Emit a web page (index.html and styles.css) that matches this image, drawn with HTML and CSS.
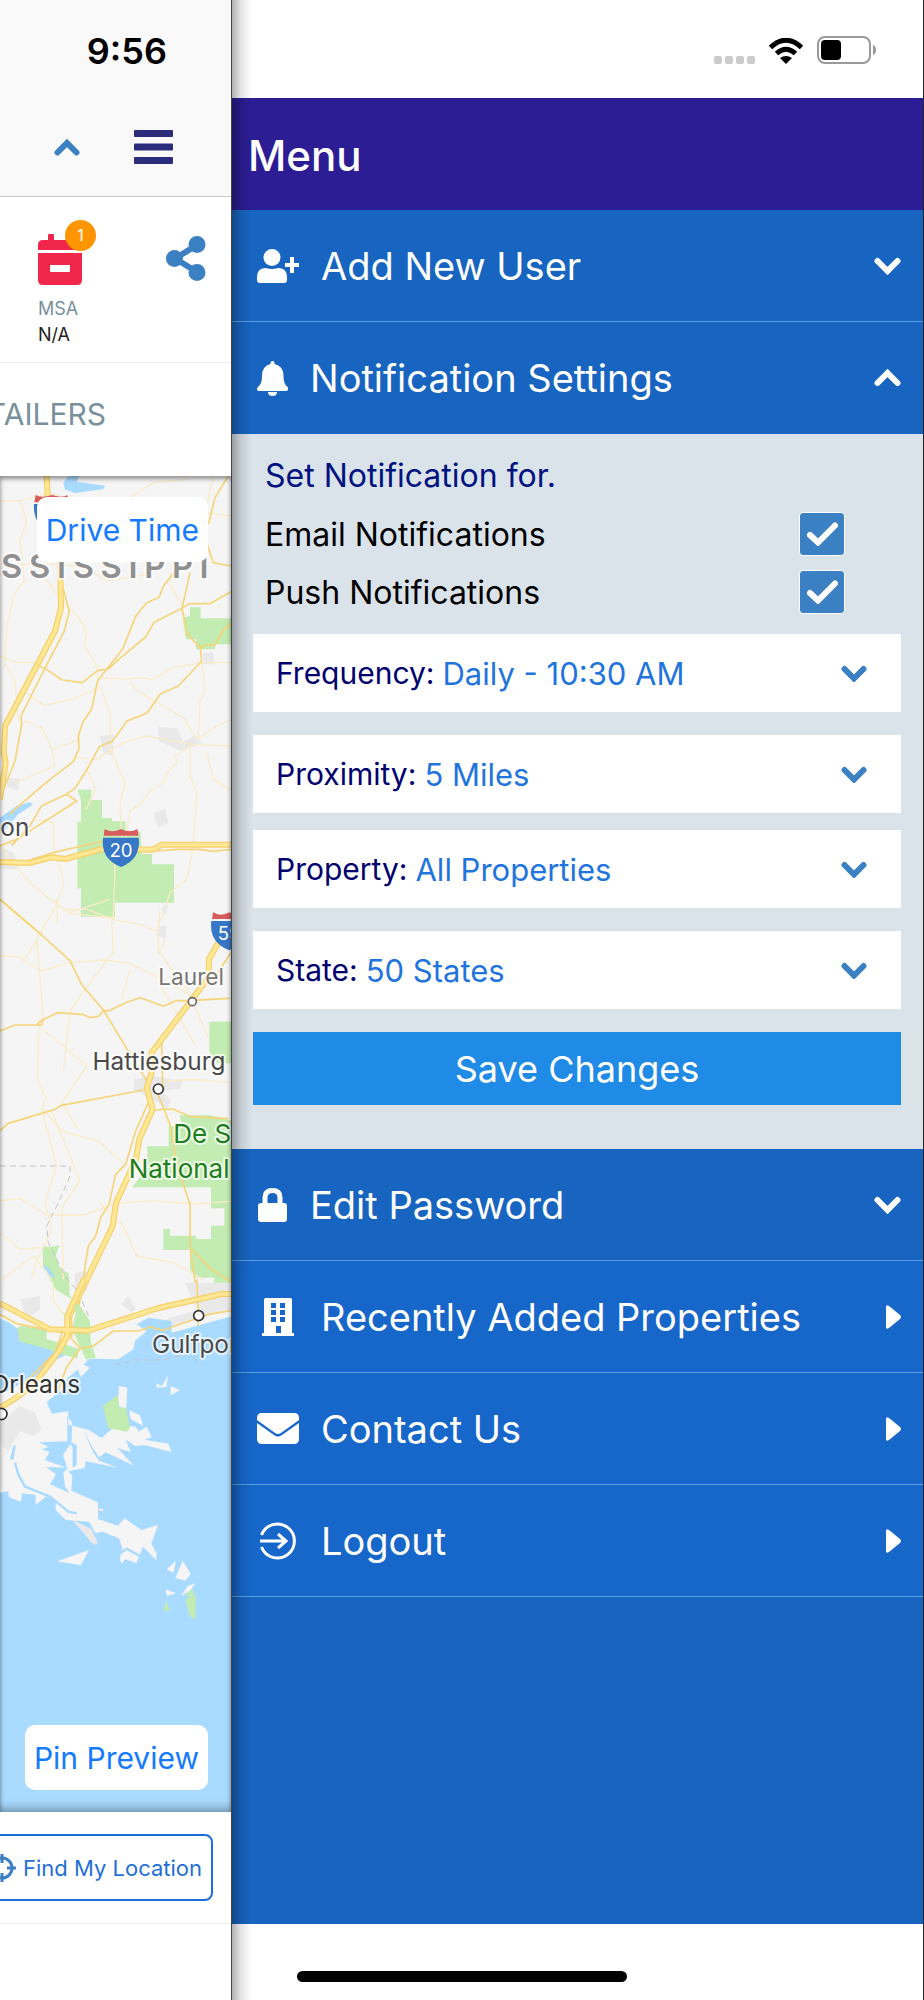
FILE: index.html
```html
<!DOCTYPE html>
<html lang="en">
<head>
    <meta charset="UTF-8">
    <meta name="viewport" content="width=device-width, initial-scale=1.0">
    <title>Menu</title>
    <link rel="stylesheet" href="styles.css">
</head>
<body>
    <div class="app">
        <main class="page">
            <header class="page-header">
                <div class="clock">9:56</div>
                <div class="page-actions">
                    <button class="icon-btn" aria-label="Collapse">
                        <svg width="26" height="17" viewBox="0 0 26 17"><path d="M3.500 13.500 13 4l9.500 9.500" fill="none" stroke="#3b80c3" stroke-width="6" stroke-linecap="round"/></svg>
                    </button>
                    <button class="icon-btn" aria-label="Open menu">
                        <svg width="39" height="34" viewBox="0 0 39 34" fill="#2c2c7c"><rect width="39" height="7" rx="1"/><rect y="13.500" width="39" height="7" rx="1"/><rect y="27" width="39" height="7" rx="1"/></svg>
                    </button>
                </div>
            </header>

            <section class="stats">
                <div class="stat">
                    <div class="stat-icon">
                        <svg width="44" height="51" viewBox="0 0 44 51"><path d="M5 6h5V1q0-1 1-1h4q1 0 1 1v5h12V1q0-1 1-1h4q1 0 1 1v5h5q5 0 5 5v5H0v-5q0-5 5-5zM0 19h44v27q0 5-5 5H5q-5 0-5-5zm13 12q-1 0-1 1v5q0 1 1 1h18q1 0 1-1v-5q0-1-1-1z" fill="#f0264b" fill-rule="evenodd"/></svg>
                        <span class="badge">1</span>
                    </div>
                    <div class="stat-label">MSA</div>
                    <div class="stat-value">N/A</div>
                </div>
                <button class="icon-btn share" aria-label="Share">
                    <svg width="40" height="45" viewBox="0 0 40 45"><path d="M31 9 9 22.500 31 36" fill="none" stroke="#3b80c3" stroke-width="6"/><g fill="#3b80c3"><circle cx="31" cy="8.500" r="8.500"/><circle cx="8.500" cy="22.500" r="8.500"/><circle cx="31" cy="36.500" r="8.500"/></g></svg>
                </button>
            </section>

            <nav class="tabs"><a class="tab" href="#">RETAILERS</a></nav>

            <section class="map">
                <svg class="map-canvas" viewBox="0 20 693 4008" preserveAspectRatio="xMaxYMin slice">
                    <rect y="0" width="693" height="4028" fill="#f5f5f5"/>

                    <!-- north -->
                    <g>
                        <path class="town" d="M475 773l55 4 20 40 35-20 22 25-70 22-60-30zM300 800l40-5v65l-30-10zM460 1030l35-10 10 40-30 15zM15 925l45 3-8 35-30-10zM610 550h32v35h-32zM0 1130l40 20 20 50H0z"/>
                        <path class="water" d="M190 40l20-25h30l-10 22 85 12-5 10-85 12-30-10zM0 1045l50-35 40-12 8 8-45 30-40 50H0z"/>
                        <path class="park" d="M570 414h32v33h91v78h-48v15h-57v-30h-30l-10-63 22-8zM232 961h42v31h32v54h30v10h40v30h45l5 68h30v31h66v115H345v42H243v-85h-11v-200h11v-65z"/>
                        <path class="lane" d="M0 95l60 0 20 60-20 60 12 120-30 40-20 90-7 120 30 50 10 120M60 95l90-25 80 30 150-10 80-50 100-10M0 285h180l80 10 60 40 120-20M640 20l-20 90-5 20 78 10M510 310v35l35 60M0 560l50 20h80M130 320l60 80 50 50 20 40-7 35 40 70 0 30 90 5 30-5 45 5 60-35 90-15 100 0 40 10M605 575l10 90-15 30-5 110M300 650l30 80v110l45 100-15 60 5 110M80 670l50 38 85-18 80-35M60 770l20-15 45 20 30 60 10 55-120 50M160 840l80-30M220 865l70 5 80-50 70-20 80 15 60 10 113 5M390 640l30 30 130 75 40 65 60-40 43-20M570 825v95l20 50-10 160-20 100-50 40-35 100 20 50-20 30M570 830l-45 30 5 20-30 30-10 30-40 25-30 40-30 20-20 120M260 900l28 60-30 60M100 1050l60 10 2 80 30 100-20 60v60M620 850l20 80 50 30M0 1130l30 40 60 70 60 50 60 42 130 15 5-160-5-70M210 1330l120-40"/>
                        <path class="road" d="M685 20l-40 65-20 80M620 220l20 60 53 10M693 367l-63 36h-62l-22 14-84 42-25 44-82 68-30 28-33 5-45 36-60-8-53-35-30-12M570 310l-24 107 17 78 38 40 4 40-70 75-54 24-40 57-60 24-43 60-40 17-38 70-35 55-30 20-70 32-35 60-55 60M530 300l-40 50-12 33-38 18-32 38-40 100-75 95-18 85-26 38-14 42 2 38-17 40-70 53-100 85-20 20M190 360l18 65-15 60-60 115-70 140 2 25-20 110-45 110M601 537l12-10h32l25-45 23-18M0 1130l50-20 180-115-30-20M80 1175l80-25 150-35M470 1145l60-5h70l40 6 53-6M0 1290l105 90"/>
                        <path class="highway-edge" d="M140 20l3 60 37 180 3 155-18 70-150 285-4 80 6 30-17 110M0 1178l85 3 70-17 40 5 110-30 155 2 25-15h208"/>
                        <path class="highway" d="M140 20l3 60 37 180 3 155-18 70-150 285-4 80 6 30-17 110M0 1178l85 3 70-17 40 5 110-30 155 2 25-15h208"/>
                        <g transform="translate(102 77)">
                            <path d="M5 0q15 10 50 0 30 10 45 0l5 22H1z" fill="#d95c5c"/><path d="M0 27h107q5 65-53 88Q-4 92 0 27z" fill="#3777c8"/>
                        </g>
                        <text class="state-name" x="646" y="326" text-anchor="end">MISSISSIPPI</text>
                        <text class="city" x="88" y="1101" text-anchor="end">Jackson</text>
                        <g transform="translate(309 1078)">
                            <path d="M5 1q22 14 49 0 27 14 49 0l4 20H2z" fill="#d95c5c"/><path d="M0 27h107q8 63-53 88Q-8 90 0 27z" fill="#3777c8"/>
                            <text class="shield" x="54" y="84" text-anchor="middle">20</text>
                        </g>
                    </g>

                    <!-- central -->
                    <g transform="translate(0 1290)">
                        <path class="town" d="M402 540l60-10 85 15-5 22-60 8 30 25-10 30-45-30-55-28zM470 82l30-3-3 40-27-12zM485 25l20-10-10 35zM225 1120l35-5v60h-35zM365 1215l20-25 22 40-12 8z"/>
                        <path class="park" d="M628 367h65v125h-43l-22-35zM538 648h90l65 15v560h-50v-88h-53l-20-25v-58H490v-63h20v20h78v10h45v-40h40v-52h-40v-63H397l45-60v-63h64v-60h42zM128 1040l20 3 30-5-10 30 10 35 28 20 3 60-40-10-40-70zM60 1280l80 10v30l-85 0z"/>
                        <path class="water" d="M130 1095l20 15 15 25-20-5zM655 1205h38v12l-30-2z"/>
                        <path class="lane" d="M0 170l60 2 15 15 50 28 80-25 110-8 75 10 100 50 80 45M110 120l20 240-15 30-2 155 25 50M170 0v15l-60 105-35 60M130 390l130 110-75 110 50 80M200 30l60 0 80 30 80 15 50 20M335 60l5 100-25 30-60 80-45 65-20 180M390 210l-25 90M475 95v60l90 120 60 140M485 265l70 120 30 50M140 590l-15 40 45 170-35 110 20 80-50 110-10 40M125 625l60 70 110 30 85 75M0 905l60-8 80 50h110l100-35 100-8 140 10 100-8M155 635l85 210-55 80 5 220M300 910l70 70 40 90 110 20 90 50M0 1000l60 50 60-5M0 1145l100-75 60 75v60l50 60M500 545l80-5 110 10M480 30l-5 65"/>
                        <path class="road" d="M0 0l125 107 85 77 35 72 65 76 70 115 65 105M0 395l45-18h80l5-18M108 378l12-12 52-26 75 5 25 10 25-5 13-17 15 2 55-26 42-14 68 26 38-17 35 0 127-7M485 430l3 130-18 15 40 100 20 120 40 120v130l22 150 3 100M430 572L185 618l-20 12L25 672 0 694M458 632l60-3 50 22 115 7M575 1050l60 60 58 37M445 610l-38 85-30 100-30 30-20 90-25 40-15 55-22 30-30 190M693 160l-60 90"/>
                        <path class="boundary" d="M0 800h210v30l-30 70-40 80 5 50 50 100 40 50 35 80"/>
                        <path class="highway-edge" d="M655 130l-28 50-2 55-60 80-110 145v60l-15 45 18 65-40 90-10 60-60 130-10 70-130 270v50l-50 75"/>
                        <path class="highway" d="M655 130l-28 50-2 55-60 80-110 145v60l-15 45 18 65-40 90-10 60-60 130-10 70-130 270v50l-50 75"/>
                        <g transform="translate(634 38)">
                            <path d="M5 1q22 14 49 0 27 14 49 0l4 20H2z" fill="#d95c5c"/><path d="M0 27h107q8 63-53 88Q-8 90 0 27z" fill="#3777c8"/>
                            <text class="shield" x="54" y="84" text-anchor="middle">59</text>
                        </g>
                        <circle class="dot small" cx="577" cy="307" r="12"/>
                        <circle class="dot" cx="475" cy="569" r="15"/>
                        <text class="city minor" x="672" y="256" text-anchor="end">Laurel</text>
                        <text class="city" x="676" y="511" text-anchor="end">Hattiesburg</text>
                        <text class="forest" x="520" y="732">De Soto</text>
                        <text class="forest" x="386" y="836">National Forest</text>
                    </g>

                    <!-- gulf coast -->
                    <g transform="translate(0 2430)">
                        <path class="town" d="M555 10h138v80l-130 40-110 28 50-40 90-25zM60 60l60-10v40l-40 30zM365 75l20-25 22 40-12 8z"/>
                        <path class="water" d="M0 118l25 10 30 22 15 35 60 8 110 50 45-5 70 2 45-30 5-25 35-30-30-20 35-20 70 10v35l203-55v1505H0z"/>
                        <path class="land" d="M0 345l100-50 60-50 80-40 20 8 0 35-60 50-10 30-50 40 15 35 50-7v40l60 15 40 25 40-35h60l30 40 70 12 10 25-80-20-30 2-28-20 15 38-40-12 50 53-85-40-20 15-20-30-25-50 25 60 20 30 60 22-100-20-3 20-50 10-15-50 25-35 3-60-15-20v75l-85 3 38 18-20 35 60 22 22 25-3 45 80 35v50l60 20 20-22 50 35 50-15-20 55 15 30 0 20-40-40-20 50-15 45-35-55 8-35-10-30-50-20-20 5-20-35-70-5-30-30v-30l-30-10-30 25v-30l-40-5-5 25-50-20-40-25zM225 245l45 20-28 28zM357 320l25 5-3 65-25-10zM352 388h26l-10 28zM388 393l32 15 10 32-38-20zM410 460l30-18 15 32-50 16zM172 846l95-34-25 46zM292 687l20 2-8 8zM468 312l18 8 18-32-5 35-28 2zM512 320l28 12-28 16zM500 870l28-25-8 35zM548 844l24 40-16 20-30-8zM585 912l-12 20-30 18 20-30zM498 930l30 12-28 8z"/>
                        <path class="town" d="M0 430l60-50 45 20 20 50-25 20-40-15-35 60-25-20zM215 720l60 30 25 55-25-15z"/>
                        <path class="water" d="M125 510l35-12v22zM150 615l18-30-30-22 65 2-13 15 5 42 15 20zM205 485l25 12v60l-12 8v-60zM0 640l25-5 3 35-20 2zM375 840l45 15 25 35-25-5-22 20-25-25-8-25zM30 540l10-40 8-3-8 45z"/>
                        <path class="channel" d="M45 550l10 35 20 37 75 30 55 45 25 5M290 795l70 28 20-15 45 25"/>
                        <path class="park" d="M308 380l45-33 5 38h20l12 60-10 12-55-10zM52 145l22-5 8 28 55 10 100 30-5 30-40-12-60-20-75-20zM155 0h45l10 50 30 30 30 45 2 60 15 50-30 5-40-90 10-50-12-40-40-25zM555 960l33-15-2 75-16-8zM490 993l10-30 9 33zM555 948l22-20 5 14-8 10z"/>
                        <path class="boundary" d="M345 257l60-15h80l80-18 45 35"/>
                        <path class="road" d="M0 105l50 28 100 20 55 8M340 155h75l35-12 40 10 130-47 73-12M340 155l-60 45-38 8-28-30 5-40M190 150l-25 70-110 110M240 208l-40 55-30 80M590 0l5 95"/>
                        <path class="highway-edge" d="M0 72l150 78 115 4 210-68 190-42h28M252 0l-50 110v60l-25 45-75 100-60 45-42 25"/>
                        <path class="highway" d="M0 72l150 78 115 4 210-68 190-42h28M252 0l-50 110v60l-25 45-75 100-60 45-42 25"/>
                        <circle class="dot" cx="596" cy="109" r="15"/>
                        <circle class="dot" cx="4" cy="404" r="17"/>
                        <text class="city" x="456" y="222">Gulfport</text>
                        <text class="city dark" x="240" y="342" text-anchor="end">New Orleans</text>
                    </g>
                </svg>
                <button class="map-btn drive-time">Drive Time</button>
                <button class="map-btn pin-preview">Pin Preview</button>
            </section>

            <footer class="page-footer">
                <button class="locate-btn">
                    <svg width="28" height="28" viewBox="0 0 28 28" fill="none" stroke="#3b80c3" stroke-width="3"><circle cx="14" cy="14" r="10"/><path d="M14 0v9M14 19v9M0 14h9M19 14h9"/></svg>
                    Find My Location
                </button>
            </footer>
            <div class="safe-area"></div>
        </main>

        <aside class="drawer">
            <div class="status-bar">
                <svg width="41" height="8" viewBox="0 0 41 8" fill="#ccc"><rect width="8" height="8" rx="2"/><rect x="11" width="8" height="8" rx="2"/><rect x="22" width="8" height="8" rx="2"/><rect x="33" width="8" height="8" rx="2"/></svg>
                <svg width="36" height="26" viewBox="0 0 36 26"><path d="M2.500 9.500Q18-5 33.500 9.500M8.500 15.500Q18 7 27.500 15.500" fill="none" stroke="#000" stroke-width="5"/><path d="M12 20q6-4 12 0l-6 6z"/></svg>
                <svg width="59" height="28" viewBox="0 0 59 28"><rect x="1" y="1" width="52" height="26" rx="7" fill="none" stroke="#999" stroke-width="2"/><rect x="4" y="4" width="20" height="20" rx="4"/><path d="M56 9q3 1 3 5t-3 5z" fill="#999"/></svg>
            </div>

            <h1 class="drawer-title">Menu</h1>

            <nav class="menu">
                <button class="menu-item">
                    <svg width="42" height="34" viewBox="0 0 42 34" fill="#fff"><ellipse cx="15" cy="8.500" rx="8.500" ry="8.500"/><path d="M0 28q0-9 9-9 6 2 12 0 9 0 9 9v3q0 3-3 3H3q-3 0-3-3zM33 8h4v6h5v4h-5v6h-4v-6h-5v-4h5z"/></svg>
                    <span>Add New User</span>
                    <svg class="arrow" width="27" height="18" viewBox="0 0 27 18"><path d="M3.500 4 13.500 14l10-10" fill="none" stroke="#fff" stroke-width="6" stroke-linecap="round"/></svg>
                </button>
                <button class="menu-item" aria-expanded="true">
                    <svg width="31" height="35" viewBox="0 0 31 35" fill="#fff"><path d="M13.500 2q0-2 2-2t2 2v1q9 2 9 12 0 8 4 11 1 1 .5 2.500-.5 1.500-2 1.500H2Q.500 30 0 28.500-.200 27 1 26q4-3 4-11 0-10 8.500-12zM11 31h9q0 4-4.500 4T11 31z"/></svg>
                    <span>Notification Settings</span>
                    <svg class="arrow" width="27" height="18" viewBox="0 0 27 18"><path d="M3.500 14 13.500 4l10 10" fill="none" stroke="#fff" stroke-width="6" stroke-linecap="round"/></svg>
                </button>

                <form class="settings">
                    <h2 class="settings-title">Set Notification for.</h2>
                    <label class="check-row">
                        Email Notifications
                        <span class="check">
                            <input type="checkbox" checked>
                            <svg width="31" height="24" viewBox="0 0 31 24"><path d="M3 13l8 7.500L28 3.500" fill="none" stroke="#fff" stroke-width="6" stroke-linecap="round"/></svg>
                        </span>
                    </label>
                    <label class="check-row">
                        Push Notifications
                        <span class="check">
                            <input type="checkbox" checked>
                            <svg width="31" height="24" viewBox="0 0 31 24"><path d="M3 13l8 7.500L28 3.500" fill="none" stroke="#fff" stroke-width="6" stroke-linecap="round"/></svg>
                        </span>
                    </label>

                    <div class="fields">
                        <div class="field">
                            <label for="frequency">Frequency:</label>
                            <select id="frequency"><option>Daily - 10:30 AM</option></select>
                            <svg width="26" height="17" viewBox="0 0 26 17"><path d="M3.500 4 13 13.500 22.500 4" fill="none" stroke="#3b80c3" stroke-width="6" stroke-linecap="round"/></svg>
                        </div>
                        <div class="field">
                            <label for="proximity">Proximity:</label>
                            <select id="proximity"><option>5 Miles</option></select>
                            <svg width="26" height="17" viewBox="0 0 26 17"><path d="M3.500 4 13 13.500 22.500 4" fill="none" stroke="#3b80c3" stroke-width="6" stroke-linecap="round"/></svg>
                        </div>
                    </div>
                    <div class="fields">
                        <div class="field">
                            <label for="property">Property:</label>
                            <select id="property"><option>All Properties</option></select>
                            <svg width="26" height="17" viewBox="0 0 26 17"><path d="M3.500 4 13 13.500 22.500 4" fill="none" stroke="#3b80c3" stroke-width="6" stroke-linecap="round"/></svg>
                        </div>
                        <div class="field">
                            <label for="state">State:</label>
                            <select id="state"><option>50 States</option></select>
                            <svg width="26" height="17" viewBox="0 0 26 17"><path d="M3.500 4 13 13.500 22.500 4" fill="none" stroke="#3b80c3" stroke-width="6" stroke-linecap="round"/></svg>
                        </div>
                        <button type="button" class="save-btn">Save Changes</button>
                    </div>
                </form>

                <button class="menu-item">
                    <svg width="31" height="34" viewBox="0 0 31 34"><path d="M8 16V9.500q0-7 7.500-7t7.500 7V16" fill="none" stroke="#fff" stroke-width="5"/><rect x="1" y="15" width="29" height="19" rx="3" fill="#fff"/></svg>
                    <span>Edit Password</span>
                    <svg class="arrow" width="27" height="18" viewBox="0 0 27 18"><path d="M3.500 4 13.500 14l10-10" fill="none" stroke="#fff" stroke-width="6" stroke-linecap="round"/></svg>
                </button>
                <a class="menu-item link" href="#">
                    <svg width="42" height="38" viewBox="0 0 42 38"><path d="M7 1.500Q7 0 8.500 0h25Q35 0 35 1.500V35h2v3H5v-3h2zM14 5v5h5V5zm9 0v5h5V5zm-9 7v5h5v-5zm9 0v5h5v-5zm-9 7v5h5v-5zm9 0v5h5v-5zm-4 9v7h5v-7z" fill="#fff" fill-rule="evenodd"/></svg>
                    <span>Recently Added Properties</span>
                    <svg class="arrow" width="15" height="24" viewBox="0 0 15 24"><path d="M0 2q0-3 3-1l11 9q2 2 0 4L3 23q-3 2-3-1z" fill="#fff"/></svg>
                </a>
                <a class="menu-item link" href="#">
                    <svg width="42" height="31" viewBox="0 0 42 31" fill="#fff"><path d="M0 5q0-5 5-5h32q5 0 5 5v2L24 20q-3 2-6 0L0 7z"/><path d="M0 10l17 12q4 3 8 0l17-12v16q0 5-5 5H5q-5 0-5-5z"/></svg>
                    <span>Contact Us</span>
                    <svg class="arrow" width="15" height="24" viewBox="0 0 15 24"><path d="M0 2q0-3 3-1l11 9q2 2 0 4L3 23q-3 2-3-1z" fill="#fff"/></svg>
                </a>
                <a class="menu-item link" href="#">
                    <svg width="42" height="38" viewBox="0 0 42 38" fill="none" stroke="#fff" stroke-width="3"><path d="M4.500 13a17 17 0 1 1 0 12M3 19h26M21 12l8 7-8 7"/></svg>
                    <span>Logout</span>
                    <svg class="arrow" width="15" height="24" viewBox="0 0 15 24"><path d="M0 2q0-3 3-1l11 9q2 2 0 4L3 23q-3 2-3-1z" fill="#fff"/></svg>
                </a>
            </nav>

            <div class="home-area"><span class="home-indicator"></span></div>
        </aside>
    </div>
</body>
</html>
```
FILE: styles.css
```css
* {
    margin: 0;
    padding: 0;
    box-sizing: border-box;
}

body {
    font-family: Inter, 'Liberation Sans', sans-serif;
    background: #fff;
}

button, select {
    font-family: inherit;
    border: none;
    background: none;
    cursor: pointer;
}

a {
    text-decoration: none;
}

svg {
    display: block;
    flex-shrink: 0;
}

.app {
    display: flex;
    min-height: 100vh;
    overflow: hidden;
}

/* Page behind the drawer */
.page {
    width: 25%;
    flex-shrink: 0;
    display: flex;
    flex-direction: column;
    overflow: hidden;
}

.page-header {
    height: 197px;
    background: #f9f9f9;
    border-bottom: 1px solid #c8c8c8;
    display: flex;
    flex-direction: column;
    align-items: flex-end;
}

.clock {
    padding: 28px 64px 0 0;
    font-size: 36px;
    line-height: 46px;
    font-weight: 600;
}

.page-actions {
    display: flex;
    align-items: center;
    gap: 54px;
    padding: 56px 58px 0 0;
}

.stats {
    height: 166px;
    border-bottom: 1px solid #eee;
    display: flex;
    justify-content: flex-end;
    gap: 85px;
    padding: 37px 25px 0 0;
}

.stat {
    width: 43px;
    font-size: 18px;
    line-height: 26px;
}

.stat-icon {
    position: relative;
    margin-bottom: 11px;
}

.badge {
    position: absolute;
    top: -14px;
    left: 27px;
    width: 31px;
    height: 31px;
    border-radius: 50%;
    background: #ff9500;
    color: #fff;
    font-size: 16px;
    line-height: 31px;
    text-align: center;
}

.stat-label {
    color: #78909c;
}

.stat-value {
    color: #222;
}

.share {
    align-self: flex-start;
    padding-top: 2px;
}

.tabs {
    height: 113px;
    display: flex;
    justify-content: flex-end;
    align-items: center;
    padding: 0 125px 12px 0;
}

.tab {
    color: #78909c;
    font-size: 30px;
    line-height: 40px;
}

.map {
    position: relative;
    flex: 1;
    overflow: hidden;
    background: #a9daff;
}

.map::after {
    content: '';
    position: absolute;
    inset: 0;
    box-shadow: inset 0 3px 4px rgba(0, 0, 0, 0.4), inset 0 -8px 10px -4px rgba(0, 0, 0, 0.3);
    pointer-events: none;
}

.map-canvas {
    width: 100%;
}

.map-btn {
    position: absolute;
    right: 23px;
    height: 65px;
    padding: 0 9px;
    border-radius: 10px;
    background: #fff;
    color: #147aff;
    font-size: 30px;
    white-space: nowrap;
}

.drive-time {
    top: 21px;
}

.pin-preview {
    bottom: 22px;
}

.page-footer {
    height: 112px;
    display: flex;
    justify-content: flex-end;
    align-items: center;
    padding-right: 18px;
    border-bottom: 1px solid #eee;
}

.locate-btn {
    display: flex;
    align-items: center;
    gap: 7px;
    flex-shrink: 0;
    height: 67px;
    padding: 0 9px;
    border: 2px solid #1a6fdc;
    border-radius: 8px;
    color: #1f6fd6;
    font-size: 22px;
    white-space: nowrap;
}

.safe-area {
    height: 76px;
}

/* Map drawing */
.water { fill: #a9daff; }
.land { fill: #f5f5f5; }
.park { fill: #c3ecb2; }
.town { fill: #e9e9e9; }

.lane, .road, .highway, .highway-edge, .boundary, .channel {
    fill: none;
    stroke-linejoin: round;
}

.lane {
    stroke: #faecc8;
    stroke-width: 4;
}

.road {
    stroke: #f6d479;
    stroke-width: 5;
}

.highway {
    stroke: #ffe794;
    stroke-width: 11;
}

.highway-edge {
    stroke: #f5cf68;
    stroke-width: 18;
}

.channel {
    stroke: #a9daff;
    stroke-width: 7;
}

.boundary {
    stroke: #c4c4c4;
    stroke-width: 3;
    stroke-dasharray: 18 12;
}

.dot {
    fill: #fff;
    stroke: #333;
    stroke-width: 5;
}

.dot.small {
    stroke: #666;
}

.city, .forest, .state-name {
    paint-order: stroke;
    stroke: #fff;
    stroke-width: 12;
    stroke-opacity: 0.7;
    stroke-linejoin: round;
    font-size: 73px;
    fill: #4a4a4a;
}

.city.minor {
    fill: #777;
    font-size: 68px;
}

.city.dark { fill: #333; }

.forest {
    fill: #1e7d1e;
    font-size: 78px;
}

.state-name {
    fill: #909090;
    font-size: 98px;
    font-weight: 600;
    letter-spacing: 20px;
}

.shield {
    fill: #fff;
    font-size: 56px;
}

/* Drawer */
.drawer {
    position: relative;
    flex: 1;
    display: flex;
    flex-direction: column;
    border-left: 1px solid #444;
    border-right: 1px solid #222;
}

.drawer::before {
    content: '';
    position: absolute;
    top: 0;
    bottom: 0;
    left: 0;
    width: 20px;
    background: linear-gradient(to right, rgba(0, 0, 0, 0.3), rgba(0, 0, 0, 0.1) 45%, transparent);
    pointer-events: none;
    z-index: 1;
}

.status-bar {
    height: 98px;
    display: flex;
    justify-content: flex-end;
    align-items: flex-end;
    gap: 13px;
    padding: 0 47px 34px 0;
}

.drawer-title {
    height: 112px;
    padding: 0 16px;
    background: #2c1d94;
    color: #fff;
    font-size: 42px;
    line-height: 115px;
    font-weight: 500;
}

.menu {
    flex: 1;
    background: #1765c0;
}

.menu-item {
    width: 100%;
    height: 112px;
    display: flex;
    align-items: center;
    gap: 22px;
    padding: 0 22px 0 25px;
    border-bottom: 1px solid #559fe3;
    color: #fff;
    font-size: 38px;
    line-height: 48px;
}

.menu-item.link {
    background: #1766c9;
}

.menu-item[aria-expanded="true"] {
    border-bottom: none;
}

.arrow {
    margin-left: auto;
}

.settings {
    padding: 13px 22px 44px 21px;
    background: #dae3ea;
}

.settings-title {
    padding-left: 12px;
    color: #00127f;
    font-size: 32px;
    line-height: 58px;
    font-weight: 400;
}

.check-row {
    display: flex;
    justify-content: space-between;
    align-items: center;
    height: 58px;
    padding: 0 56px 0 12px;
    font-size: 32px;
}

.check {
    position: relative;
}

.check input {
    display: block;
    appearance: none;
    width: 46px;
    height: 44px;
    border: 1px solid #fff;
    border-radius: 4px;
    background: #3b80c3;
}

.check svg {
    position: absolute;
    top: 10px;
    left: 8px;
    display: none;
    pointer-events: none;
}

.check input:checked + svg {
    display: block;
}

.fields {
    display: flex;
    flex-direction: column;
    gap: 23px;
    padding-top: 13px;
}

.fields + .fields {
    padding-top: 17px;
}

.field {
    position: relative;
    display: flex;
    align-items: center;
    gap: 8px;
    height: 78px;
    padding: 0 23px;
    background: #fff;
    color: #00006e;
    font-size: 30px;
}

.field select {
    appearance: none;
    flex: 1;
    color: #1f74de;
    font-size: 31px;
}

.field svg {
    position: absolute;
    right: 34px;
    pointer-events: none;
}

.save-btn {
    height: 73px;
    background: #208ae7;
    color: #fff;
    font-size: 36px;
    line-height: 48px;
}

.home-area {
    height: 76px;
    padding: 47px 0 0 65px;
}

.home-indicator {
    display: block;
    width: 330px;
    height: 11px;
    border-radius: 6px;
    background: #000;
}
```
